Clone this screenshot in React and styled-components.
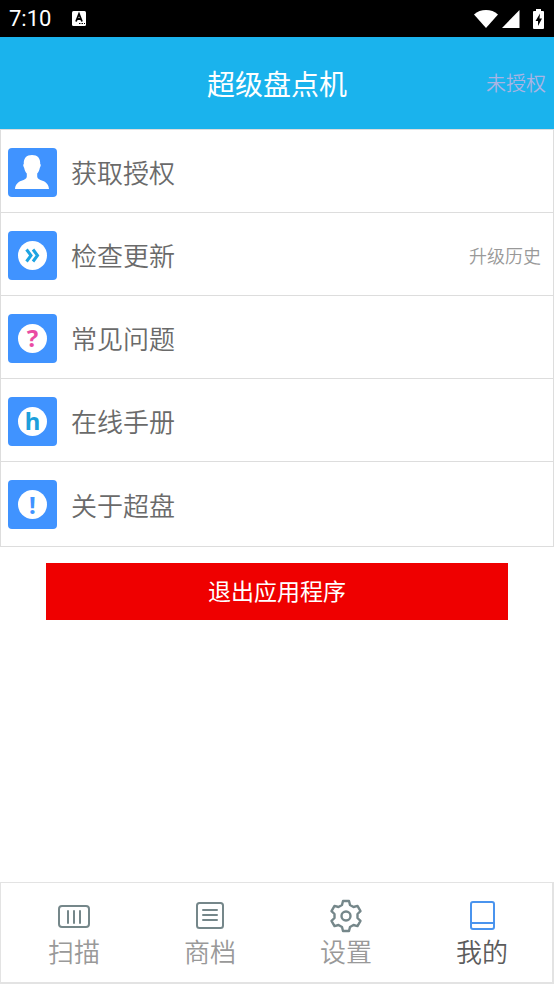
import styled, { createGlobalStyle } from "styled-components";

const GlobalStyle = createGlobalStyle`
  * {
    box-sizing: border-box;
  }
  body {
    margin: 0;
    background: #fff;
    font-family: "Noto Sans CJK SC", sans-serif;
    font-weight: 350;
  }
  a {
    color: inherit;
    text-decoration: none;
  }
`;

const Screen = styled.div`
  display: flex;
  flex-direction: column;
  min-height: 100vh;
`;

const StatusBar = styled.div`
  display: flex;
  align-items: center;
  height: 37px;
  padding: 0 9px;
  background: #000;
  color: #fff;
`;

const Clock = styled.time`
  margin-right: 20px;
  font-family: Roboto, sans-serif;
  font-size: 22px;
  font-weight: 400;
  line-height: 38px;
`;

const StatusIcons = styled.div`
  display: flex;
  align-items: center;
  gap: 4px;
  margin-left: auto;

  svg:last-child {
    margin-left: 8px;
  }
`;

const Header = styled.header`
  display: grid;
  grid-template-columns: 1fr auto 1fr;
  align-items: center;
  height: 92px;
  padding: 0 8px;
  background: #1ab3ed;
`;

const Title = styled.h1`
  grid-column: 2;
  margin: 0;
  color: #fff;
  font-size: 28px;
  font-weight: 400;
  line-height: 40px;
`;

const License = styled.span`
  justify-self: end;
  color: #a9b4e3;
  font-size: 20px;
  line-height: 30px;
`;

const Menu = styled.ul`
  margin: 0;
  padding: 0 0 1px;
  border: 1px solid #ddd;
  list-style: none;
`;

const MenuItem = styled.li`
  display: flex;
  align-items: center;
  justify-content: space-between;
  height: 83px;
  padding: 2px 12px 0 7px;

  &:not(:last-child) {
    border-bottom: 1px solid #ddd;
  }
`;

const MenuLink = styled.a`
  display: flex;
  align-items: center;
  gap: 14px;
  color: #6a6a6a;
  font-size: 26px;
  line-height: 40px;
`;

const HistoryLink = styled.a`
  color: #999;
  font-size: 18px;
  line-height: 28px;
`;

const Tile = styled.span`
  display: flex;
  align-items: center;
  justify-content: center;
  width: 49px;
  height: 49px;
  border-radius: 4px;
  background: #4093ff;
`;

const Disc = styled.span`
  display: flex;
  align-items: center;
  justify-content: center;
  width: 29px;
  height: 29px;
  border-radius: 50%;
  background: #fff;
  color: ${(props) => props.$color};
  font-family: "Noto Sans", sans-serif;
  font-size: 24px;
  font-weight: 700;
  line-height: 28px;
`;

const ExitButton = styled.button`
  height: 57px;
  margin: 16px 46px;
  padding: 0 0 4px;
  border: 0;
  background: #ef0000;
  color: #fff;
  font-family: inherit;
  font-size: 23px;
  font-weight: 400;
  line-height: 34px;
`;

const TabBar = styled.nav`
  display: flex;
  height: 102px;
  margin-top: auto;
  padding: 15px 2px 0 5px;
  border: 1px solid #e3e3e3;
  border-width: 1px 2px 2px 1px;
`;

const Tab = styled.a`
  display: flex;
  flex: 1;
  flex-direction: column;
  align-items: center;
  color: ${(props) => (props.$active ? "#5c5c5c" : "#999")};
  font-size: 26px;
  line-height: 34px;

  svg {
    color: ${(props) => (props.$active ? "#4a94ee" : "#75878a")};
  }
`;

function PersonIcon() {
  return (
    <svg width="49" height="49" viewBox="0 0 49 49" fill="#fff">
      <path d="M24 7c5.500 0 8.600 3.300 8.200 9 .9.400.7 2-.4 4-.5 2.500-1.400 4.500-2.600 5.500v3c0 2.300 2.300 3.200 5.300 4.200 4 1.200 6.300 4.500 6.500 8.300H7c.2-3.800 2.500-7.100 6.500-8.300 3-1 5.300-1.900 5.300-4.200v-3c-1.200-1-2.100-3-2.600-5.500-1.100-2-1.300-3.600-.4-4C15.400 10.300 18.500 7 24 7Z" />
    </svg>
  );
}

function ChevronsIcon() {
  return (
    <svg
      width="29"
      height="29"
      viewBox="0 0 29 29"
      fill="none"
      stroke="#1da4e2"
      strokeWidth="3"
    >
      <path d="M8.500 8.500 13 14.500 8.500 20.500M15 8.500 19.500 14.500 15 20.500" />
    </svg>
  );
}

function KeyboardIcon() {
  return (
    <svg width="16" height="17" viewBox="0 0 16 17">
      <rect x="1" y="1" width="14" height="15" rx="1.500" fill="#fff" />
      <path
        d="M5 11.500 8 4l3 7.500M6.200 9h3.600"
        fill="none"
        stroke="#000"
        strokeWidth="1.800"
      />
      <path d="M8 13h1.500v1H8zM10.500 13H12v1h-1.500zM13 13h1v1h-1z" />
    </svg>
  );
}

function WifiIcon() {
  return (
    <svg width="24" height="20" viewBox="0 0 24 20" fill="#fff">
      <path d="M0 5.500C6.500-.4 17.500-.4 24 5.500L12 19Z" />
    </svg>
  );
}

function SignalIcon() {
  return (
    <svg width="18" height="20" viewBox="0 0 18 20" fill="#fff">
      <path d="M17.500 1v18H0Z" />
    </svg>
  );
}

function BatteryIcon() {
  return (
    <svg width="13" height="20" viewBox="0 0 13 20">
      <path
        d="M4 0h5v2h2q1 0 1 1v16q0 1-1 1H2q-1 0-1-1V3q0-1 1-1h2Z"
        fill="#fff"
      />
      <path d="M8 4.500 3.500 12h2.500v5l4-7.500H7.500Z" />
    </svg>
  );
}

function TabIcon({ children }) {
  return (
    <svg
      width="36"
      height="36"
      viewBox="0 0 36 36"
      fill="none"
      stroke="currentColor"
      strokeWidth="2"
      strokeLinecap="round"
      strokeLinejoin="round"
    >
      {children}
    </svg>
  );
}

const menu = [
  { label: "获取授权", icon: <PersonIcon /> },
  {
    label: "检查更新",
    icon: (
      <Disc>
        <ChevronsIcon />
      </Disc>
    ),
    extra: "升级历史",
  },
  { label: "常见问题", icon: <Disc $color="#ea4ba3">?</Disc> },
  { label: "在线手册", icon: <Disc $color="#1d9fdb">h</Disc> },
  { label: "关于超盘", icon: <Disc $color="#4093ff">!</Disc> },
];

const tabs = [
  {
    label: "扫描",
    icon: (
      <>
        <rect x="3" y="8" width="30" height="21" rx="3" />
        <path d="M12 13v12M18 13v12M24 13v12" />
      </>
    ),
  },
  {
    label: "商档",
    icon: (
      <>
        <rect x="5" y="5" width="26" height="25" rx="2.500" />
        <path d="M11 12h14M11 17h14M11 22h14" />
      </>
    ),
  },
  {
    label: "设置",
    icon: (
      <>
        <path
          d="M14 7 15 3H21L22 7 25.500 9 29.500 7.900 32.500 13.100 29.500 16V20L32.500 22.900 29.500 28.100 25.500 27 22 29 21 33H15L14 29 10.500 27 6.500 28.100 3.500 22.900 6.500 20V16L3.500 13.100 6.500 7.900 10.500 9Z"
          strokeWidth="2.400"
        />
        <circle cx="18" cy="18" r="4.500" strokeWidth="2.400" />
      </>
    ),
  },
  {
    label: "我的",
    active: true,
    icon: (
      <>
        <rect x="7" y="4" width="23" height="27" rx="2" />
        <path d="M7 25h23" />
      </>
    ),
  },
];

export default function App() {
  return (
    <Screen>
      <GlobalStyle />
      <StatusBar>
        <Clock>7:10</Clock>
        <KeyboardIcon />
        <StatusIcons>
          <WifiIcon />
          <SignalIcon />
          <BatteryIcon />
        </StatusIcons>
      </StatusBar>

      <Header>
        <Title>超级盘点机</Title>
        <License>未授权</License>
      </Header>

      <main>
        <Menu>
          {menu.map((item) => (
            <MenuItem key={item.label}>
              <MenuLink href="#">
                <Tile aria-hidden="true">{item.icon}</Tile>
                {item.label}
              </MenuLink>
              {item.extra && <HistoryLink href="#">{item.extra}</HistoryLink>}
            </MenuItem>
          ))}
        </Menu>
      </main>
      <ExitButton type="button">退出应用程序</ExitButton>

      <TabBar>
        {tabs.map((tab) => (
          <Tab
            key={tab.label}
            href="#"
            $active={tab.active}
            aria-current={tab.active ? "page" : undefined}
          >
            <TabIcon>{tab.icon}</TabIcon>
            {tab.label}
          </Tab>
        ))}
      </TabBar>
    </Screen>
  );
}
